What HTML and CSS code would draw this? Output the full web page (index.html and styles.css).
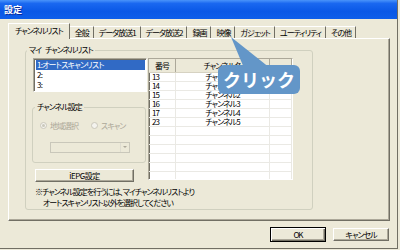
FILE: index.html
```html
<!DOCTYPE html>
<html>
<head>
    <title>設定</title>
    <link rel="stylesheet" href="styles.css">
</head>
<body>
    <div class="window">
        <div class="titlebar">設定</div>
        <div class="client">
            <div class="tabs">
                <div class="tab active">チャンネルリスト</div>
                <div class="tab">全般</div>
                <div class="tab">データ放送1</div>
                <div class="tab">データ放送2</div>
                <div class="tab">録画</div>
                <div class="tab">映像</div>
                <div class="tab">ガジェット</div>
                <div class="tab">ユーティリティ</div>
                <div class="tab">その他</div>
            </div>
            <div class="panel">
                <fieldset class="group main-group">
                    <legend>マイ チャンネルリスト</legend>
                    <div class="group-row">
                        <div class="left-col">
                            <div class="listbox">
                                <div class="list-item selected">1:オートスキャンリスト</div>
                                <div class="list-item">2:</div>
                                <div class="list-item">3:</div>
                            </div>
                            <fieldset class="group sub-group">
                                <legend>チャンネル設定</legend>
                                <div class="radios">
                                    <span class="radio checked"></span>
                                    <span class="radio-label">地域選択</span>
                                    <span class="radio"></span>
                                    <span class="radio-label">スキャン</span>
                                </div>
                                <div class="combo"><span class="combo-btn"></span></div>
                            </fieldset>
                            <button class="button epg-btn">iEPG設定</button>
                        </div>
                        <div class="listview">
                            <table>
                                <thead>
                                    <tr>
                                        <th class="col-num">番号</th>
                                        <th class="col-name">チャンネル名</th>
                                        <th></th>
                                    </tr>
                                </thead>
                                <tbody>
                                    <tr><td>13</td><td class="name">チャンネル0</td><td></td></tr>
                                    <tr><td>14</td><td class="name">チャンネル1</td><td></td></tr>
                                    <tr><td>15</td><td class="name">チャンネル2</td><td></td></tr>
                                    <tr><td>16</td><td class="name">チャンネル3</td><td></td></tr>
                                    <tr><td>17</td><td class="name">チャンネル4</td><td></td></tr>
                                    <tr><td>23</td><td class="name">チャンネル5</td><td></td></tr>
                                    <tr><td></td><td></td><td></td></tr>
                                    <tr><td></td><td></td><td></td></tr>
                                    <tr><td></td><td></td><td></td></tr>
                                    <tr><td></td><td></td><td></td></tr>
                                    <tr><td></td><td></td><td></td></tr>
                                    <tr><td></td><td></td><td></td></tr>
                                </tbody>
                            </table>
                        </div>
                    </div>
                    <p class="note">※チャンネル設定を行うには、マイチャンネルリストより<br>オートスキャンリスト以外を選択してください</p>
                </fieldset>
            </div>
            <div class="dialog-buttons">
                <button class="button default">OK</button>
                <button class="button">キャンセル</button>
            </div>
        </div>
        <svg class="callout-tail" width="45" height="34" viewBox="0 0 45 34">
            <polygon points="3,2 16,33 42,33" fill="#6396c8"/>
        </svg>
        <div class="callout">クリック</div>
    </div>
</body>
</html>
```

FILE: styles.css
```css
body {
    margin: 0;
    background-color: #ECE9D8;
    font-family: "Noto Sans CJK JP", sans-serif;
    font-size: 8px;
    font-feature-settings: "palt";
    letter-spacing: -1px;
    color: #000;
}
.window {
    position: relative;
    width: 397px;
    height: 248px;
    border-right: 1px solid #716F64;
    border-bottom: 1px solid #716F64;
    background-color: #ECE9D8;
}
.titlebar {
    height: 19px;
    line-height: 19px;
    padding-left: 4px;
    color: white;
    font-size: 9px;
    font-weight: bold;
    letter-spacing: 0;
    text-shadow: 1px 1px #0A2A9C;
    background: linear-gradient(to bottom, #4A94FA 0%, #1A68F0 18%, #0A58E6 60%, #0E5EEA 100%);
}
.client {
    padding: 4px 7px 0 8px;
}
.tabs {
    display: flex;
    align-items: flex-end;
    height: 15px;
    position: relative;
    z-index: 1;
}
.tab {
    height: 12px;
    line-height: 12px;
    padding: 0 4px 0 5px;
    box-sizing: border-box;
    border-top: 1px solid #fff;
    border-right: 1px solid #716F64;
    white-space: nowrap;
}
.tab.active {
    height: 16px;
    line-height: 14px;
    margin-bottom: -1px;
    padding: 0 6px;
    border-left: 1px solid #fff;
    background-color: #ECE9D8;
}
.panel {
    height: 183px;
    box-sizing: border-box;
    border: 1px solid;
    border-color: #fff #716F64 #716F64 #fff;
    box-shadow: inset -1px -1px #ACA899;
    padding: 6px 0 0 16px;
}
.group {
    margin: 0;
    min-width: 0;
    box-sizing: border-box;
    border: 1px solid #D0D0BF;
    border-radius: 3px;
}
.group legend {
    padding: 0 2px;
    line-height: 10px;
    word-spacing: 3px;
}
.main-group {
    width: 288px;
    height: 165px;
    padding: 3px 0 0 7px;
}
.main-group > legend {
    margin-left: -6px;
}
.group-row {
    display: flex;
    gap: 1px;
}
.left-col {
    width: 114px;
}
.listbox {
    height: 34px;
    box-sizing: border-box;
    border: 1px solid;
    border-color: #ACA899 #fff #fff #ACA899;
    box-shadow: inset 1px 1px #716F64;
    background-color: white;
    padding: 1px 1px 1px 2px;
}
.list-item {
    height: 10px;
    line-height: 10px;
    padding-left: 1px;
    letter-spacing: -0.8px;
}
.list-item.selected {
    background-color: #316AC5;
    color: white;
}
.sub-group {
    width: 114px;
    height: 61px;
    margin: 10px 0 0 -1px;
    padding: 8px 0 0 7px;
}
.sub-group > legend {
    margin-left: -5px;
}
.radios {
    display: flex;
    align-items: center;
    height: 10px;
    color: #ACA899;
    white-space: nowrap;
}
.radio {
    flex-shrink: 0;
    width: 7px;
    height: 7px;
    box-sizing: border-box;
    border: 1px solid #CAC8BB;
    border-radius: 50%;
    background-color: #F4F3EE;
    position: relative;
}
.radio.checked::after {
    content: "";
    position: absolute;
    left: 1px;
    top: 1px;
    width: 3px;
    height: 3px;
    border-radius: 50%;
    background-color: #CAC8BB;
}
.radio-label {
    margin: 0 13px 0 3px;
}
.combo {
    width: 80px;
    height: 11px;
    box-sizing: border-box;
    margin: 12px 0 0 10px;
    border: 1px solid #C9C7BA;
    background-color: #ECE9D8;
    display: flex;
    justify-content: flex-end;
}
.combo-btn {
    width: 9px;
    height: 9px;
    box-sizing: border-box;
    border-left: 1px solid #DEDCD0;
    position: relative;
}
.combo-btn::after {
    content: "";
    position: absolute;
    left: 2px;
    top: 3px;
    border-left: 2px solid transparent;
    border-right: 2px solid transparent;
    border-top: 2px solid #ACA899;
}
.button {
    font: inherit;
    letter-spacing: inherit;
    color: #000;
    padding: 0;
    height: 13px;
    line-height: 11px;
    box-sizing: border-box;
    background-color: #ECE9D8;
    border: 1px solid;
    border-color: #fff #716F64 #716F64 #fff;
    box-shadow: inset -1px -1px #ACA899;
}
.epg-btn {
    display: block;
    width: 99px;
    margin: 6px 0 0 2px;
    letter-spacing: -0.5px;
}
.listview {
    width: 145px;
    height: 122px;
    box-sizing: border-box;
    border: 1px solid;
    border-color: #ACA899 #fff #fff #ACA899;
    box-shadow: inset 1px 1px #716F64;
    background-color: white;
    overflow: hidden;
}
table {
    width: 100%;
    border-collapse: collapse;
    table-layout: fixed;
}
th {
    height: 13px;
    padding: 0;
    font-weight: normal;
    text-align: center;
    line-height: 13px;
    background-color: #ECE9D8;
    border-right: 1px solid #ACA899;
    border-bottom: 1px solid #D6D2C2;
}
th.col-num {
    width: 26px;
}
th.col-name {
    width: 93px;
}
td {
    height: 8px;
    padding: 0 0 0 3px;
    line-height: 8px;
    border-bottom: 1px solid #EAE9E4;
    border-right: 1px solid #EAE9E4;
    white-space: nowrap;
}
td.name {
    text-align: center;
    padding: 0;
}
.note {
    margin: 4px 0 0;
    padding-left: 10px;
    text-indent: -8px;
    line-height: 11px;
    white-space: nowrap;
}
.dialog-buttons {
    display: flex;
    justify-content: flex-end;
    align-items: center;
    gap: 7px;
    margin: 6px 1px 0 0;
}
.dialog-buttons .button {
    width: 56px;
}
.button.default {
    height: 15px;
    line-height: 13px;
    border-color: #000;
    box-shadow: inset 1px 1px #fff, inset -1px -1px #716F64, inset -2px -2px #ACA899;
}
.callout {
    position: absolute;
    left: 218px;
    top: 65px;
    width: 82px;
    height: 29px;
    border-radius: 6px;
    background-color: #6396C8;
    color: white;
    font-size: 18px;
    font-weight: bold;
    font-feature-settings: normal;
    letter-spacing: 0;
    line-height: 29px;
    text-align: center;
}
.callout-tail {
    position: absolute;
    left: 228px;
    top: 35px;
}
```
